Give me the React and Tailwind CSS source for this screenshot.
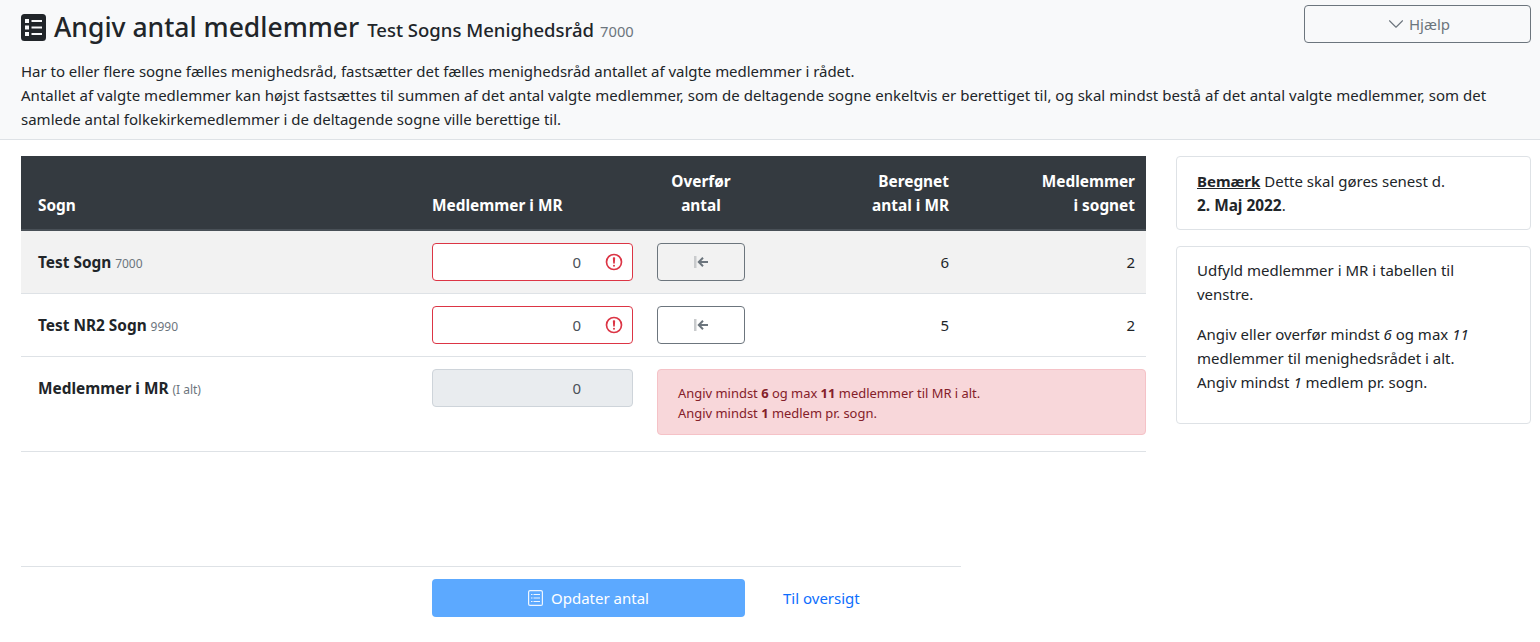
import { ChevronDown } from "lucide-react";

function ListIcon({ className }) {
  return (
    <svg className={className} viewBox="0 0 25 27">
      <path
        fill="currentColor"
        fillRule="evenodd"
        d="M3.500 0h18A3.500 3.500 0 0 1 25 3.500v20a3.500 3.500 0 0 1-3.500 3.500h-18A3.500 3.500 0 0 1 0 23.500v-20A3.500 3.500 0 0 1 3.500 0zM4 5v4h4V5H4zm6.500 1v2H21V6H10.500zM4 11.500v4h4v-4H4zm6.500 1v2H21v-2H10.500zM4 18v4h4v-4H4zm6.500 1v2H21v-2H10.500z"
      />
    </svg>
  );
}

function ListOutlineIcon({ className }) {
  return (
    <svg className={className} viewBox="0 0 15 16" fill="none" stroke="currentColor">
      <rect x=".6" y=".6" width="13.800" height="14.800" rx="1.500" strokeWidth="1.200" />
      <path strokeWidth="1.100" d="M3 4.500h9M3 8h9M3 11.500h9" />
      <path stroke="#5ca9ff" strokeWidth="1" d="M5 3.500v9" />
    </svg>
  );
}

function ErrorIcon() {
  return (
    <svg className="absolute right-[8px] top-[8px] size-5 text-[#dc3545]" viewBox="0 0 12 12" fill="none" stroke="currentColor">
      <circle cx="6" cy="6" r="4.500" />
      <path strokeLinejoin="round" d="M5.800 3.600h.4L6 6.500z" />
      <circle cx="6" cy="8.200" r=".6" fill="currentColor" stroke="none" />
    </svg>
  );
}

function TransferIcon() {
  return (
    <svg className="size-4" viewBox="0 0 16 16" fill="none">
      <rect x="1" y="2" width="2.500" height="12" fill="#c9cbcd" />
      <path stroke="#6c757d" strokeWidth="2" d="M15 8H6.500M10 3.800 5.800 8l4.200 4.200" />
    </svg>
  );
}

function TransferButton() {
  return (
    <button className="flex h-[38px] w-[88px] items-center justify-center rounded border border-[#6c757d]">
      <TransferIcon />
    </button>
  );
}

function InvalidInput() {
  return (
    <div className="relative flex h-[38px] w-[201px] items-center justify-end rounded border border-[#dc3545] bg-white pr-[51px] text-[#495057]">
      0
      <ErrorIcon />
    </div>
  );
}

function SognRow({ name, nr, beregnet, antal, shaded }) {
  return (
    <tr className={`border-b border-[#dee2e6] ${shaded ? "bg-[#f2f2f2]" : ""}`}>
      <td className="h-[63px] px-[17px] pt-[2px] align-middle">
        <b className="text-[15.4px] font-bold">{name}</b> <span className="text-xs text-[#6c757d]">{nr}</span>
      </td>
      <td className="px-3 align-middle"><InvalidInput /></td>
      <td className="px-3 align-middle"><TransferButton /></td>
      <td className="px-3 text-right align-middle">{beregnet}</td>
      <td className="pr-[11px] text-right align-middle">{antal}</td>
    </tr>
  );
}

export default function App() {
  return (
    <div className="min-h-[642px] bg-white font-['Noto_Sans',sans-serif] text-[15px] leading-6 text-[#212529]">
      <header className="h-[140px] border-b border-[#dee2e6] bg-[#f8f9fa] pl-[21px] pr-[9px] pt-[5px]">
        <div className="flex items-start justify-between">
          <h1 className="flex h-[45px] items-center">
            <ListIcon className="mr-2 h-[27px] w-[25px] text-[#212529]" />
            <div className="mt-[2px] flex items-baseline">
              <span className="text-[26.5px] font-medium">Angiv antal medlemmer</span>
              <span className="ml-2 text-[18.5px] font-medium">Test Sogns Menighedsråd</span>
              <span className="ml-1.5 text-[14.7px] text-[#6c757d]">7000</span>
            </div>
          </h1>
          <button className="flex h-[38px] w-[227px] items-center justify-center rounded border border-[#6c757d] pr-[2px] text-[#6c757d]">
            <ChevronDown className="size-[26px]" strokeWidth={1} />
            Hjælp
          </button>
        </div>
        <div className="mt-[9px]">
          <p className="tracking-[-0.033px]">Har to eller flere sogne fælles menighedsråd, fastsætter det fælles menighedsråd antallet af valgte medlemmer i rådet.</p>
          <p><span className="tracking-[0.026px]">Antallet af valgte medlemmer kan højst fastsættes til summen af det antal valgte medlemmer, som de deltagende sogne enkeltvis er berettiget til, og skal mindst bestå af det antal valgte medlemmer, som det</span> samlede antal folkekirkemedlemmer i de deltagende sogne ville berettige til.</p>
        </div>
      </header>

      <main className="flex items-start pl-[21px] pr-[9px] pt-4">
        <div className="w-[1125px]">
          <table className="w-full table-fixed border-collapse">
            <colgroup>
              <col className="w-[399px]" />
              <col className="w-[225px]" />
              <col className="w-[112px]" />
              <col className="w-[204px]" />
              <col className="w-[185px]" />
            </colgroup>
            <thead>
              <tr className="h-[74px] border-b-2 border-[#495057] bg-[#343a40] text-[15.4px] font-bold text-white">
                <th className="px-[17px] pb-[11px] text-left align-bottom">Sogn</th>
                <th className="px-3 pb-[11px] text-left align-bottom">Medlemmer i MR</th>
                <th className="px-3 pb-[11px] text-center align-bottom">Overfør<br />antal</th>
                <th className="px-3 pb-[11px] text-right align-bottom">Beregnet<br />antal i MR</th>
                <th className="pb-[11px] pr-[11px] text-right align-bottom">Medlemmer<br />i sognet</th>
              </tr>
            </thead>
            <tbody>
              <SognRow name="Test Sogn" nr="7000" beregnet="6" antal="2" shaded />
              <SognRow name="Test NR2 Sogn" nr="9990" beregnet="5" antal="2" />
              <tr className="border-b border-[#dee2e6]">
                <td className="h-[95px] px-[17px] pt-[19px] align-top">
                  <b className="text-[15.4px] font-bold">Medlemmer i MR</b> <span className="text-xs text-[#6c757d]">(I alt)</span>
                </td>
                <td className="px-3 pt-3 align-top">
                  <div className="flex h-[38px] w-[201px] items-center justify-end rounded border border-[#ced4da] bg-[#e9ecef] pr-[51px] text-[#495057]">0</div>
                </td>
                <td colSpan={3} className="pl-3 pt-3 align-top">
                  <div className="h-[66px] rounded border border-[#f5c2c7] bg-[#f8d7da] px-5 pt-[13px] text-[12.95px] leading-5 text-[#842029]">
                    <p>Angiv mindst <b>6</b> og max <b>11</b> medlemmer til MR i alt.</p>
                    <p>Angiv mindst <b>1</b> medlem pr. sogn.</p>
                  </div>
                </td>
              </tr>
            </tbody>
          </table>

          <div className="mt-[114px] flex h-[51px] w-[940px] items-center border-t border-[#dee2e6] pt-[12px] pl-[411px]">
            <button className="flex h-[38px] w-[313px] items-center justify-center gap-2 rounded bg-[#5ca9ff] text-white">
              <ListOutlineIcon className="h-4 w-[15px] opacity-90" />
              Opdater antal
            </button>
            <a className="ml-[38px] text-[#0d6efd]" href="#">Til oversigt</a>
          </div>
        </div>

        <aside className="ml-[30px] flex w-[355px] flex-col gap-4">
          <div className="h-[74px] rounded border border-[#dee2e6] bg-white px-5 pt-[12px]">
            <b className="font-bold underline">Bemærk</b> Dette skal gøres senest d.<br />
            <b className="text-[15.4px] font-bold">2. Maj 2022</b>.
          </div>
          <div className="h-[178px] rounded border border-[#dee2e6] bg-white px-5 pt-[11px]">
            <p className="mb-4">Udfyld medlemmer i MR i tabellen til venstre.</p>
            <p>Angiv eller overfør mindst <i>6</i> og max <i>11</i> medlemmer til menighedsrådet i alt.</p>
            <p>Angiv mindst <i>1</i> medlem pr. sogn.</p>
          </div>
        </aside>
      </main>
    </div>
  );
}
